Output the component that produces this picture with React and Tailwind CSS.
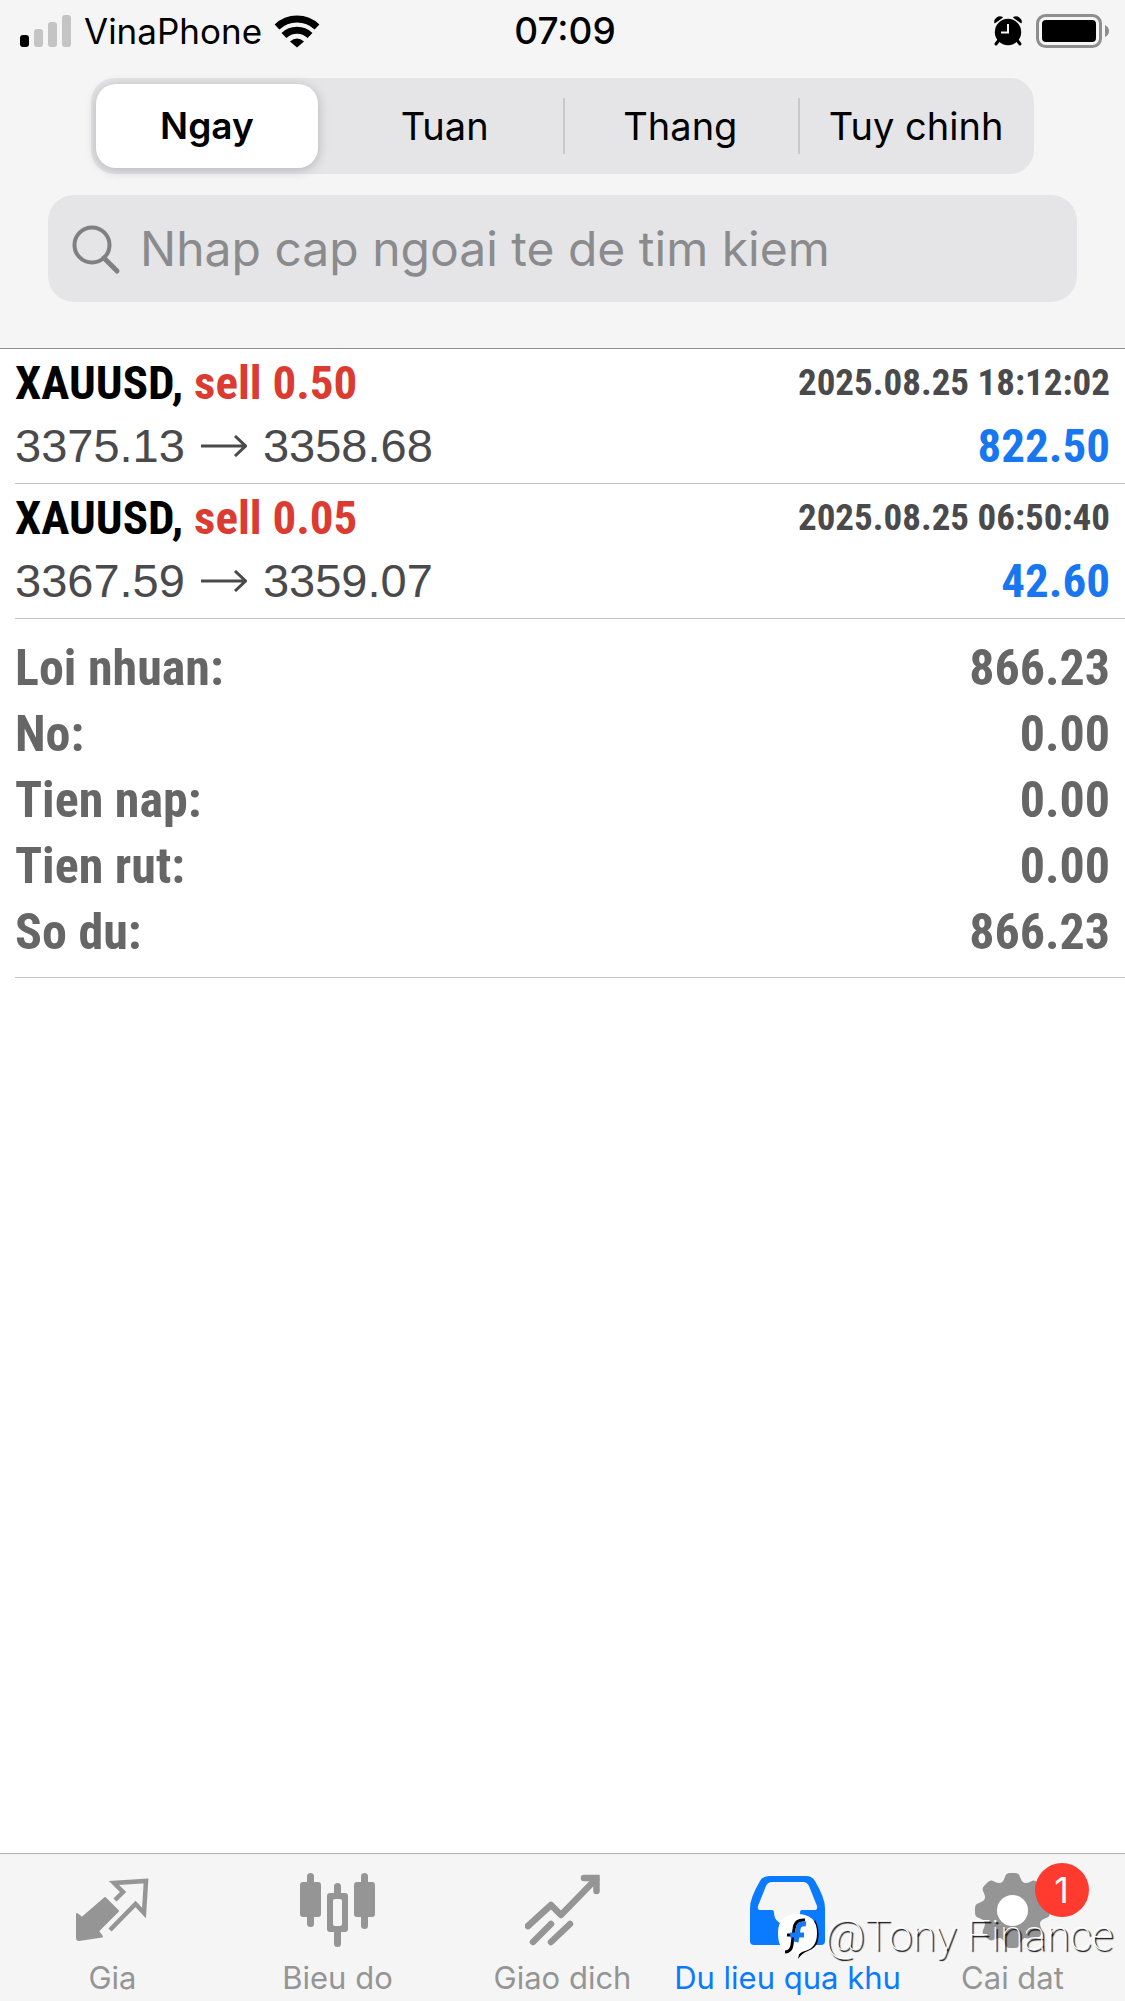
import React, { useState } from "react";

const UI = "font-['Inter','Liberation_Sans',sans-serif]";
const NARROW = "font-['Roboto_Condensed','Roboto',sans-serif] font-bold";

function Signal() {
  return (
    <svg width="52" height="34" viewBox="0 0 52 34" aria-hidden="true">
      <rect x="0" y="21" width="9" height="12" rx="3" fill="#000" />
      <rect x="14" y="15" width="9" height="18" rx="3" fill="#c4c4c4" />
      <rect x="28" y="8" width="9" height="25" rx="3" fill="#c4c4c4" />
      <rect x="42" y="1" width="9" height="32" rx="3" fill="#c4c4c4" />
    </svg>
  );
}

function Wifi() {
  return (
    <svg width="46" height="34" viewBox="0 0 46 34" aria-hidden="true">
      <g fill="none" stroke="#000" strokeWidth="7">
        <path d="M3 13 A29 29 0 0 1 43 13" />
        <path d="M10 21.500 A18.500 18.500 0 0 1 36 21.500" />
      </g>
      <path d="M23 33.500 L16 27.500 Q23 21.500 30 27.500 Z" fill="#000" />
    </svg>
  );
}

function Alarm() {
  return (
    <svg width="28" height="30" viewBox="0 0 28 30" aria-hidden="true">
      <path d="M1 6.500 A5 5 0 0 1 8 1.500 Z M27 6.500 A5 5 0 0 0 20 1.500 Z" stroke="#000" strokeWidth="1.500" strokeLinejoin="round" />
      <circle cx="14" cy="16" r="13.200" />
      <path d="M5 24 L2 28 M23 24 L26 28" stroke="#000" strokeWidth="3" strokeLinecap="round" />
      <path d="M14 8 V16.500 H7" fill="none" stroke="#f5f5f5" strokeWidth="2" />
    </svg>
  );
}

function Battery() {
  return (
    <svg width="74" height="34" viewBox="0 0 74 34" aria-hidden="true">
      <rect x="1.500" y="1.500" width="63" height="31" rx="8" fill="none" stroke="#8e8e8e" strokeWidth="3" />
      <rect x="6" y="6" width="54" height="22" rx="4" />
      <path d="M69 11 Q73 13 73 17 Q73 21 69 23 Z" fill="#8e8e8e" />
    </svg>
  );
}

function PriceIcon() {
  return (
    <svg width="75" height="75" viewBox="0 0 75 75" aria-hidden="true">
      <path d="M2 41 L7 45 L30 25 L43 38 L23 58 L27 63.500 L4 67 Q2 67 2 65 Z" fill="currentColor" stroke="currentColor" strokeWidth="2" strokeLinejoin="round" />
      <path d="M40 27 L48 19 L39 10 L71 8 L69 40 L60.500 31 L35 57" fill="none" stroke="currentColor" strokeWidth="4.500" />
    </svg>
  );
}

function ChartIcon() {
  return (
    <svg width="75" height="75" viewBox="0 0 75 75" fill="currentColor" aria-hidden="true">
      <rect x="0" y="9" width="21" height="35" rx="3" />
      <rect x="7" y="0" width="7" height="54" rx="3.500" />
      <rect x="34" y="10" width="7" height="16" rx="3.500" />
      <rect x="34" y="54" width="7" height="20" rx="3.500" />
      <path fillRule="evenodd" d="M30 20 H45 Q48 20 48 23 V56 Q48 59 45 59 H30 Q27 59 27 56 V23 Q27 20 30 20 Z M35 26 Q33 26 33 28 V51 Q33 53 35 53 H40 Q42 53 42 51 V28 Q42 26 40 26 Z" />
      <rect x="54" y="9" width="21" height="35" rx="3" />
      <rect x="61" y="0" width="7" height="56" rx="3.500" />
    </svg>
  );
}

function TradeIcon() {
  return (
    <svg width="75" height="75" viewBox="0 0 75 75" fill="none" stroke="currentColor" strokeWidth="6.500" strokeLinecap="round" aria-hidden="true">
      <path d="M3 53 L26 32 L36 42 L71 6" strokeLinejoin="round" />
      <path d="M59 5 H71.500 V18" />
      <path d="M8 69 L26 51 M26 69 L45 51" />
    </svg>
  );
}

function HistoryIcon() {
  return (
    <svg width="75" height="75" viewBox="0 0 75 75" fill="currentColor" aria-hidden="true">
      <path fillRule="evenodd" d="M19 3 H56 Q62 3 65 8 Q75 25 75 35 V68 Q75 72 71 72 H4 Q0 72 0 68 V35 Q0 25 10 8 Q13 3 19 3 Z M22 9 Q18 9 16 13 L8 33 Q7 37 10 37 H22 Q24 37 24 40 A13 12 0 0 0 50 40 Q50 37 52 37 H64 Q68 37 67 33 L59 13 Q57 9 53 9 Z" />
    </svg>
  );
}

function SettingsIcon() {
  return (
    <svg width="75" height="75" viewBox="0 0 75 75" aria-hidden="true">
      <g fill="currentColor">
        <circle cx="37.500" cy="37.500" r="30" />
        {[0, 45, 90, 135, 180, 225, 270, 315].map((a) => (
          <path key={a} transform={`rotate(${a} 37.500 37.500)`} d="M25 11 Q29 8 30 4 Q31 0 35 0 H40 Q44 0 45 4 Q46 8 50 11 Z" />
        ))}
      </g>
      <circle cx="37.500" cy="37.500" r="15.500" fill="#fff" />
    </svg>
  );
}

function PageLogo() {
  return (
    <svg width="43" height="46" viewBox="0 0 43 46" aria-hidden="true">
      <path d="M38 6 Q43 14 41 27 Q39 34 31 37 Q25 39 21 45 L23 36 Z" fill="#000" />
      <path d="M20 0 Q40 0 40 19 Q40 34 28 37 Q23 38 20 43 L18 38 L10 39 L4 33 Q1 28 1 19 Q1 0 20 0 Z" fill="#fff" />
      <path d="M28 6 Q18 5 17 15 L15 31 Q14 38 8 38 M10 21 H17" fill="none" stroke="#000" strokeWidth="3" />
      <path d="M29 10 Q22 9 21 15 L19 28 M13 21 H27" fill="none" stroke="#1678f2" strokeWidth="5" />
    </svg>
  );
}

const periods = ["Ngay", "Tuan", "Thang", "Tuy chinh"];

const deals = [
  { side: "sell 0.50", time: "2025.08.25 18:12:02", open: "3375.13", close: "3358.68", profit: "822.50" },
  { side: "sell 0.05", time: "2025.08.25 06:50:40", open: "3367.59", close: "3359.07", profit: "42.60" },
];

const totals = [
  ["Loi nhuan:", "866.23"],
  ["No:", "0.00"],
  ["Tien nap:", "0.00"],
  ["Tien rut:", "0.00"],
  ["So du:", "866.23"],
];

const tabs = [
  { label: "Gia", Icon: PriceIcon },
  { label: "Bieu do", Icon: ChartIcon },
  { label: "Giao dich", Icon: TradeIcon },
  { label: "Du lieu qua khu", Icon: HistoryIcon, active: true },
  { label: "Cai dat", Icon: SettingsIcon, badge: "1" },
];

export default function App() {
  const [period, setPeriod] = useState(0);
  return (
    <div className={`${UI} flex min-h-screen flex-col bg-white text-black`}>
      <header className="border-b border-[#8f8f91] bg-[#f5f5f6] pb-[46px]">
        <div className="grid h-[62px] grid-cols-[1fr_auto_1fr] items-center pl-5 pr-[15px]">
          <div className="flex items-center gap-3">
            <Signal />
            <span className="text-[35px] leading-10">VinaPhone</span>
            <Wifi />
          </div>
          <span className="text-[37px] font-medium leading-10">07:09</span>
          <div className="flex items-center justify-end gap-3.5">
            <Alarm />
            <Battery />
          </div>
        </div>

        <div className="mx-[91px] mt-4 grid h-24 grid-cols-4 rounded-3xl bg-[#e5e5e7] py-1.5">
          {periods.map((p, i) => (
            <div key={p} className="relative flex">
              <button
                type="button"
                aria-pressed={i === period}
                onClick={() => setPeriod(i)}
                className={
                  i === period
                    ? "ml-[5px] mr-[9px] grow rounded-[20px] bg-white text-[37px] font-semibold shadow-[0_2px_12px_rgba(0,0,0,0.22)]"
                    : "grow text-[38px]"
                }
              >
                {p}
              </button>
              {i > 1 && <span className="absolute left-0 top-3.5 h-14 w-0.5 bg-[#c9c9cb]" />}
            </div>
          ))}
        </div>

        <label className="mx-12 mt-[21px] flex h-[107px] items-center gap-[18px] rounded-[26px] bg-[#e5e5e7] pl-[22px] pr-5">
          <svg width="52" height="52" viewBox="0 0 52 52" fill="none" stroke="#808082" aria-hidden="true">
            <circle cx="22" cy="22" r="17.500" strokeWidth="4" />
            <path d="M34 35 L47 48" strokeWidth="5" strokeLinecap="round" />
          </svg>
          <input
            type="text"
            aria-label="Nhap cap ngoai te de tim kiem"
            placeholder="Nhap cap ngoai te de tim kiem"
            className="min-w-0 grow bg-transparent text-5xl leading-[60px] outline-none placeholder:text-[#8b8b8d] placeholder:opacity-100"
          />
        </label>
      </header>

      <main className="grow pl-[15px]">
        {deals.map((d) => (
          <section key={d.time} className="border-b border-[#c4c4c6] pb-1 pr-[15px] pt-1">
            <div className="flex h-[60px] items-center justify-between">
              <span className={`${NARROW} text-[47px] leading-[60px]`}>
                XAUUSD, <span className="text-[#db3b30]">{d.side}</span>
              </span>
              <time className={`${NARROW} text-[37px] leading-[60px] text-[#4a4a4c]`}>{d.time}</time>
            </div>
            <div className="flex h-[66px] items-center justify-between">
              <span className="flex items-center gap-4 font-['Liberation_Sans',sans-serif] text-[47px] leading-[66px] text-[#4a4a4c]">
                {d.open}
                <svg width="46" height="22" viewBox="0 0 46 22" fill="none" stroke="currentColor" strokeWidth="3" aria-label="to">
                  <path d="M0 11 H45 M34 1 L44.500 11 L34 21" />
                </svg>
                {d.close}
              </span>
              <span className={`${NARROW} text-[47px] leading-[66px] text-[#1877f0]`}>{d.profit}</span>
            </div>
          </section>
        ))}
        <dl className={`${NARROW} border-b border-[#c4c4c6] pb-3 pr-[15px] pt-4 text-[#666]`}>
          {totals.map(([name, value]) => (
            <div key={name} className="flex h-[66px] items-center justify-between text-[50px] leading-[66px]">
              <dt>{name}</dt>
              <dd>{value}</dd>
            </div>
          ))}
        </dl>
      </main>

      <nav className="relative grid h-[148px] grid-cols-5 border-t border-[#b0b0b2] bg-[#f5f5f5] pt-[19px]">
        {tabs.map(({ label, Icon, active, badge }) => (
          <a
            key={label}
            href="#"
            aria-current={active ? "page" : undefined}
            className={`relative flex flex-col items-center gap-3 ${active ? "text-[#0a7aff]" : "text-[#959595]"}`}
          >
            <Icon />
            <span className="whitespace-nowrap text-[31px] leading-9">{label}</span>
            {badge && (
              <span className="absolute -top-2.5 left-1/2 ml-[22px] flex size-[54px] items-center justify-center rounded-full bg-[#ff3b30] text-4xl text-white">
                {badge}
              </span>
            )}
          </a>
        ))}
        <div className="pointer-events-none absolute right-3 top-[60px] flex items-center gap-[5px]">
          <PageLogo />
          <span className="pb-1 font-['Roboto',sans-serif] text-[43px] font-thin leading-9 text-white [text-shadow:2px_2px_1px_#000]">
            @Tony Finance
          </span>
        </div>
      </nav>
    </div>
  );
}
